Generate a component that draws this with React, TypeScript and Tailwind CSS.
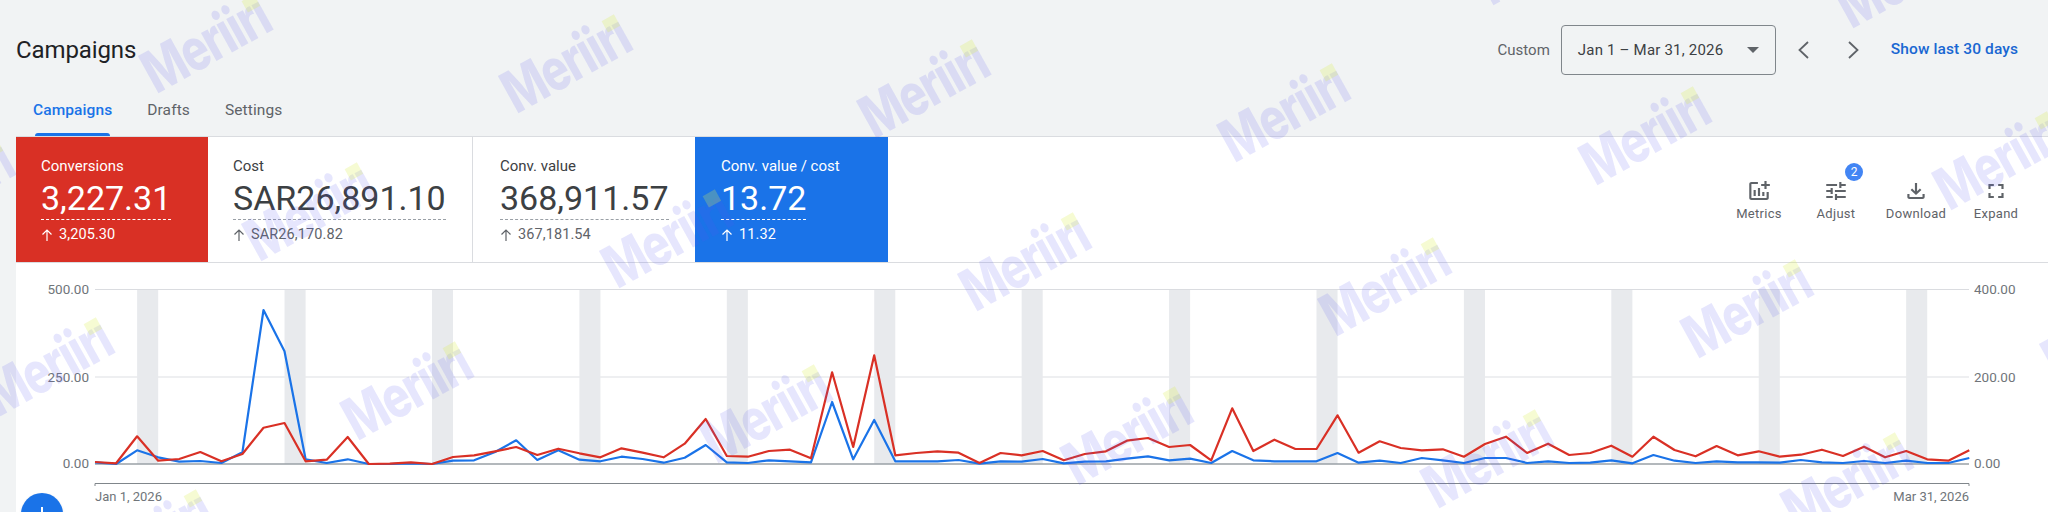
import React from 'react';

const font = { fontFamily: 'Roboto, "Liberation Sans", sans-serif' };

// heights above the zero line, in px, one per day (Jan 1 - Mar 31)
const blueData = [
  1.7, 0, 13.7, 6.7, 2.3, 3, 1, 11.7, 154, 112.7, 4.7, 1, 4.7, 0, 0, 0.7, 0, 3.3, 3.7, 12, 23.7, 4, 13.7, 4.3, 2.7, 7.3, 5, 1.3, 6.3,
  19, 1.7, 1, 3.7, 2.7, 1.7, 62, 4.7, 44, 2.7, 2.7, 2.7, 4, 0.3, 2.7, 2.3, 5, 0.7, 2.3, 2.7, 5.3, 7.7, 3.7, 5.3, 1, 13, 3.7, 2.7, 2.7, 2.7,
  11, 1.3, 3.3, 1, 6, 3.7, 1, 6, 6, 1, 2.7, 1, 1.3, 3.7, 0.7, 9, 3.3, 1, 2.7, 1.7, 1.7, 1.3, 4, 1.7, 1, 3, 1, 3.3, 1, 1, 6,
];
const redData = [
  2, 0.7, 27.7, 3.3, 5, 12, 2.7, 10, 36.3, 41, 2.7, 4.3, 27, 0, 0.3, 1.7, 0, 7, 8.7, 12.7, 17, 9, 15.3, 10.7, 6.7, 15.7, 11.3, 6.7, 20.3,
  45, 8, 7.3, 13, 14.3, 5.7, 91.7, 17, 108.7, 8.7, 11, 12.7, 11.3, 1, 11, 8.7, 13, 3.7, 10, 12.7, 23.3, 26, 17, 19, 3.7, 55.7, 13, 24.3, 15, 15,
  48.7, 11.3, 22.7, 16, 13.7, 14.7, 7.3, 20, 27.3, 11, 20.3, 9, 11, 18.3, 7.3, 27.3, 14, 7.7, 18, 8.7, 12.7, 7.3, 9.3, 14.3, 8, 17.3, 6.7, 13, 4.7, 3.3, 13.7,
];

const chartLeft = 95;
const dayWidth = 21.06;
const zeroY = 463;

const toPoints = (data: number[]) =>
  data.map((h, i) => `${(chartLeft + i * dayWidth).toFixed(1)},${(zeroY - h).toFixed(1)}`).join(' ');

const weekends = [2, 9, 16, 23, 30, 37, 44, 51, 58, 65, 72, 79, 86];

const watermarks = [
  [1540, -45], [1900, -22],
  [205, 43], [565, 63], [923, 88], [1283, 112], [1644, 135], [1998, 160],
  [-52, 188], [308, 211], [666, 238], [1024, 261], [1384, 286], [1746, 308], [2106, 331],
  [47, 366], [406, 390], [765, 413], [1126, 435], [1486, 458], [1846, 481],
  [147, 538],
];

const Watermark = ({ x, y }: { x: number; y: number }) => (
  <div
    className="absolute -translate-x-1/2 -translate-y-1/2 -rotate-[29deg] scale-y-[1.3]"
    style={{ left: x, top: y }}
  >
    <div className="relative text-[45px] leading-none font-extrabold tracking-[-1.5px] text-[rgba(90,90,240,0.15)] whitespace-nowrap">
      Meriirı
      <span className="absolute right-[1px] top-[8px] w-[14px] h-[10px] bg-[rgba(220,240,80,0.25)]" />
    </div>
  </div>
);

const ChevronIcon = ({ flip }: { flip?: boolean }) => (
  <svg width="24" height="24" viewBox="0 0 24 24" fill="none" stroke="#5f6368" strokeWidth="1.8">
    <path d={flip ? 'M7 4L15.5 12L7 20' : 'M17 4L8.5 12L17 20'} />
  </svg>
);

const ToolIcon = ({ d }: { d: string }) => (
  <svg width="26" height="24" viewBox="0 0 24 24" preserveAspectRatio="none" fill="#5f6368">
    <path d={d} />
  </svg>
);

interface ScoreCardProps {
  label: string;
  value: string;
  previous: string;
  className: string;
  dashColor: string;
  subColor: string;
  labelColor: string;
  valueColor: string;
}

const ScoreCard = ({ label, value, previous, className, dashColor, subColor, labelColor, valueColor }: ScoreCardProps) => (
  <div className={`h-full pt-[19px] shrink-0 ${className}`}>
    <div className={`text-[15px] leading-5 ${labelColor}`}>{label}</div>
    <div className={`inline-block mt-[2px] pb-[1px] border-b border-dashed text-[34px] leading-10 ${valueColor} ${dashColor}`}>
      {value}
    </div>
    <div className={`mt-[6px] flex items-center text-[14.5px] tracking-[0.1px] leading-[18px] ${subColor}`}>
      <svg width="12" height="14" viewBox="0 0 12 14" fill="none" stroke="currentColor" strokeWidth="1.2" className="mr-[6px]">
        <path d="M6 13V2M1.5 6.5L6 2L10.5 6.5" />
      </svg>
      {previous}
    </div>
  </div>
);

const ToolButton = ({ label, d, width, badge }: { label: string; d: string; width: string; badge?: string }) => (
  <div className={`relative flex flex-col items-center pt-[2px] ${width}`}>
    {badge && (
      <span className="absolute left-[49px] -top-[14px] w-[18px] h-[18px] rounded-full bg-[#4285f4] text-white text-[12px] leading-[18px] text-center">
        {badge}
      </span>
    )}
    <ToolIcon d={d} />
    <span className="mt-[2px] text-[13px] leading-[18px] tracking-[0.3px] text-[#5f6368]">{label}</span>
  </div>
);

const Chart = () => (
  <svg width="2032" height="250" viewBox="16 262 2032 250" className="block" fontSize="13.5" fill="#70757a">
    {weekends.map((d) => (
      <rect key={d} x={chartLeft + d * dayWidth} y="288" width={dayWidth} height={zeroY - 288} fill="#e8eaed" />
    ))}
    <line x1={chartLeft} x2="1969" y1="288.5" y2="288.5" stroke="#dadce0" />
    <line x1={chartLeft} x2="1969" y1="376" y2="376" stroke="#e8eaed" strokeWidth="1.5" />
    <line x1={chartLeft} x2="1969" y1="463" y2="463" stroke="#9aa0a6" strokeWidth="1.5" />
    <polyline points={toPoints(blueData)} fill="none" stroke="#1a73e8" strokeWidth="2.2" strokeLinejoin="round" />
    <polyline points={toPoints(redData)} fill="none" stroke="#d93025" strokeWidth="2.2" strokeLinejoin="round" />
    <path d="M95 485V482.5H1969V485" fill="none" stroke="#80868b" />
    <text x="89" y="293" textAnchor="end">500.00</text>
    <text x="89" y="381" textAnchor="end">250.00</text>
    <text x="89" y="467" textAnchor="end">0.00</text>
    <text x="1974" y="293">400.00</text>
    <text x="1974" y="381">200.00</text>
    <text x="1974" y="467">0.00</text>
    <text x="95" y="500" fontSize="13">Jan 1, 2026</text>
    <text x="1969" y="500" fontSize="13" textAnchor="end">Mar 31, 2026</text>
  </svg>
);

export default function App() {
  return (
    <div className="relative w-[2048px] h-[512px] overflow-hidden bg-[#f1f3f4]" style={font}>
      {/* page header */}
      <div className="h-[86px] pt-[25px] pl-4 flex items-start">
        <h1 className="h-[50px] leading-[50px] text-[24px] tracking-[-0.1px] text-[#202124]">Campaigns</h1>
        <div className="ml-auto flex items-center h-[50px]">
          <span className="text-[15px] text-[#5f6368]">Custom</span>
          <div className="ml-[11px] w-[215px] h-[50px] pl-4 pr-4 flex items-center justify-between rounded border border-[#80868b] text-[15px] tracking-[0.2px] text-[#3c4043]">
            <span>Jan 1 – Mar 31, 2026</span>
            <span className="w-0 h-0 border-x-[6px] border-x-transparent border-t-[6px] border-t-[#5f6368]" />
          </div>
          <div className="ml-[15px] flex gap-[27px]">
            <ChevronIcon />
            <ChevronIcon flip />
          </div>
          <a className="ml-[25px] mr-[30px] text-[15.5px] tracking-[0.1px] font-medium text-[#1967d2]">Show last 30 days</a>
        </div>
      </div>

      {/* tabs */}
      <div className="h-[50px] pl-[33px] flex text-[15.5px] tracking-[0.1px] text-[#5f6368]">
        <div className="relative h-full leading-[48px] font-medium text-[#1a73e8]">
          Campaigns
          <span className="absolute left-[2px] right-[2px] bottom-0 h-[3px] rounded-t-[3px] bg-[#1a73e8]" />
        </div>
        <div className="leading-[48px] ml-[35px]">Drafts</div>
        <div className="leading-[48px] ml-[35px]">Settings</div>
      </div>

      {/* score cards */}
      <div className="ml-4 h-[127px] flex items-center bg-white border-y border-[#dadce0]">
        <ScoreCard
          label="Conversions"
          value="3,227.31"
          previous="3,205.30"
          className="w-[192px] pl-[25px] bg-[#d93025]"
          labelColor="text-white"
          valueColor="text-white"
          dashColor="border-white"
          subColor="text-white"
        />
        <ScoreCard
          label="Cost"
          value="SAR26,891.10"
          previous="SAR26,170.82"
          className="w-[265px] pl-[25px] border-r border-[#dadce0]"
          labelColor="text-[#3c4043]"
          valueColor="text-[#3c4043]"
          dashColor="border-[#9aa0a6]"
          subColor="text-[#5f6368]"
        />
        <ScoreCard
          label="Conv. value"
          value="368,911.57"
          previous="367,181.54"
          className="w-[222px] pl-[27px]"
          labelColor="text-[#3c4043]"
          valueColor="text-[#3c4043]"
          dashColor="border-[#9aa0a6]"
          subColor="text-[#5f6368]"
        />
        <ScoreCard
          label="Conv. value / cost"
          value="13.72"
          previous="11.32"
          className="w-[193px] pl-[26px] bg-[#1a73e8]"
          labelColor="text-white"
          valueColor="text-white"
          dashColor="border-white"
          subColor="text-white"
        />
        <div className="ml-auto pr-3 flex items-start">
          <ToolButton
            label="Metrics"
            width="w-[74px]"
            d="M22 5v2h-3v3h-2V7h-3V5h3V2h2v3h3zm-3 14H5V5h6V3H5c-1.1 0-2 .9-2 2v14c0 1.1.9 2 2 2h14c1.1 0 2-.9 2-2v-6h-2v6zm-4-6v4h2v-4h-2zm-4 4h2V9h-2v8zm-2 0v-6H7v6h2z"
          />
          <ToolButton
            label="Adjust"
            width="w-20"
            badge="2"
            d="M3 17v2h6v-2H3zM3 5v2h10V5H3zm10 16v-2h8v-2h-8v-2h-2v6h2zM7 9v2H3v2h4v2h2V9H7zm14 4v-2H11v2h10zm-6-4h2V7h4V5h-4V3h-2v6z"
          />
          <ToolButton
            label="Download"
            width="w-20"
            d="M18 15v3H6v-3H4v3c0 1.1.9 2 2 2h12c1.1 0 2-.9 2-2v-3h-2zm-1-4l-1.41-1.41L13 12.17V4h-2v8.17L8.41 9.59 7 11l5 5 5-5z"
          />
          <ToolButton
            label="Expand"
            width="w-20"
            d="M7 14H5v5h5v-2H7v-3zm-2-4h2V7h3V5H5v5zm12 7h-3v2h5v-5h-2v3zM14 5v2h3v3h2V5h-5z"
          />
        </div>
      </div>

      {/* chart */}
      <div className="ml-4 bg-white">
        <Chart />
      </div>

      {/* new campaign button */}
      <button className="absolute left-[21px] top-[493px] w-[42px] h-[42px] rounded-full bg-[#1a73e8] shadow flex items-center justify-center">
        <svg width="16" height="16" viewBox="0 0 16 16" fill="#fff">
          <path d="M7 1h2v6h6v2H9v6H7V9H1V7h6z" />
        </svg>
      </button>

      {/* watermark overlay */}
      <div className="absolute inset-0 overflow-hidden pointer-events-none" style={{ fontFamily: 'Inter, sans-serif' }}>
        {watermarks.map(([x, y]) => (
          <Watermark key={`${x}-${y}`} x={x} y={y} />
        ))}
      </div>
    </div>
  );
}
